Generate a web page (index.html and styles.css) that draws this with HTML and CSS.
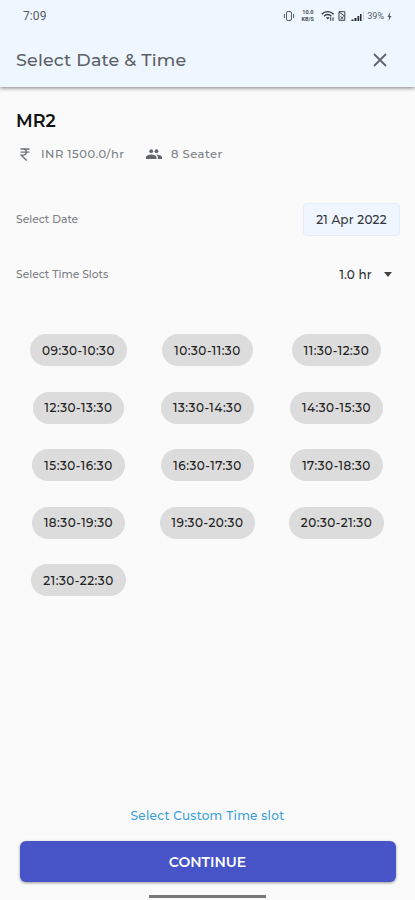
FILE: index.html
```html
<!DOCTYPE html>
<html lang="en">
<head>
    <meta charset="UTF-8">
    <meta name="viewport" content="width=device-width, initial-scale=1.0">
    <title>Select Date &amp; Time</title>
    <link rel="stylesheet" href="styles.css">
</head>
<body>
    <div class="screen">
        <header class="header">
            <div class="status-bar">
                <span class="clock">7:09</span>
                <div class="status-icons">
                    <svg class="vibrate" width="12" height="12" viewBox="0 0 12 12" fill="none" stroke="#555b62">
                        <rect x="3.5" y="1.5" width="5" height="9" rx="1.5"/>
                        <path d="M1.4 4v4M10.6 4v4"/>
                    </svg>
                    <span class="net-speed"><span>10.0</span><span>KB/S</span></span>
                    <svg class="wifi" width="14" height="12" viewBox="0 0 14 12" fill="none" stroke="#2e3238" stroke-width="1.3">
                        <path d="M.8 4.2C4.2.8 9.2.8 12.6 4.2M3 6.2c2.2-2 5.2-2 7.4 0"/>
                        <path d="M4.8 7.2h4L6.8 9.6z" fill="#2e3238" stroke="none"/>
                        <path d="M9.7 7.3v3.5M12 7.3v3.5" stroke-width="1"/>
                    </svg>
                    <svg class="sim" width="8" height="10" viewBox="0 0 8 10" fill="none" stroke="#3b4046">
                        <path d="M1 .7h5.8v8.6H1zM1 1l5.5 4M2.5 5.5l3 2.5M5.5 5.5l-3 2.5"/>
                    </svg>
                    <svg class="signal" width="14" height="11" viewBox="0 0 14 11" fill="#24282d">
                        <path d="M.5 8.5h2V10h-2zM3.5 7h2v3h-2zM6.5 5h1.7v5H6.5zM9 3h1.5v7H9z"/>
                        <path d="M12.3.5h.8V10h-.8z" fill="#c1c8d0"/>
                    </svg>
                    <span class="battery">39%</span>
                    <svg class="bolt" width="5" height="9" viewBox="0 0 5 9" fill="#555b62">
                        <path d="M3.2 0 .5 5h1.7L1.5 9l3-5H2.8z"/>
                    </svg>
                </div>
            </div>
            <div class="title-bar">
                <h1 class="title">Select Date &amp; Time</h1>
                <svg class="close" width="14" height="14" viewBox="0 0 14 14" fill="none" stroke="#5f6367" stroke-width="1.8">
                    <path d="M1 1l12 12M13 1L1 13"/>
                </svg>
            </div>
        </header>

        <main class="content">
            <h2 class="room-name">MR2</h2>
            <div class="room-info">
                <svg class="rupee" width="10" height="13" viewBox="0 0 10 13" fill="none" stroke="#6f7478" stroke-width="1.4">
                    <path d="M.5 1h9M.5 4.1h9M.5 1.1h2.6c4.4 0 4.4 6 0 6H1l5.7 5.5"/>
                </svg>
                <span class="price">INR 1500.0/hr</span>
                <svg class="people" width="16" height="10" viewBox="0 0 16 10" fill="#63686c">
                    <circle cx="5.2" cy="2.2" r="1.9"/>
                    <circle cx="10.5" cy="2.2" r="1.9"/>
                    <path d="M0 10V8.3C0 6.4 3.5 5.5 5.3 5.5s5.2.9 5.2 2.8V10zM11.8 10V8.2c0-1.1-.6-1.9-1.5-2.6 2 0 5.7.9 5.7 2.7V10z"/>
                </svg>
                <span class="seats">8 Seater</span>
            </div>

            <div class="row date-row">
                <span class="label">Select Date</span>
                <button class="date-btn">21 Apr 2022</button>
            </div>
            <div class="row slot-row">
                <span class="label">Select Time Slots</span>
                <div class="duration">
                    <span>1.0 hr</span>
                    <span class="arrow"></span>
                </div>
            </div>

            <div class="slots">
                <button class="slot">09:30-10:30</button>
                <button class="slot">10:30-11:30</button>
                <button class="slot">11:30-12:30</button>
                <button class="slot">12:30-13:30</button>
                <button class="slot">13:30-14:30</button>
                <button class="slot">14:30-15:30</button>
                <button class="slot">15:30-16:30</button>
                <button class="slot">16:30-17:30</button>
                <button class="slot">17:30-18:30</button>
                <button class="slot">18:30-19:30</button>
                <button class="slot">19:30-20:30</button>
                <button class="slot">20:30-21:30</button>
                <button class="slot">21:30-22:30</button>
            </div>
        </main>

        <footer class="footer">
            <a class="custom-link">Select Custom Time slot</a>
            <button class="continue-btn">CONTINUE</button>
            <div class="home-bar"></div>
        </footer>
    </div>
</body>
</html>
```
FILE: styles.css
```css
* {
    box-sizing: border-box;
}
body {
    margin: 0;
    font-family: Montserrat, Inter, sans-serif;
    background-color: #fafafa;
}
button {
    font-family: inherit;
    border: none;
    padding: 0;
    white-space: nowrap;
    cursor: pointer;
}
svg {
    flex: none;
}
.screen {
    display: flex;
    flex-direction: column;
    height: 900px;
}

/* Header */
.header {
    height: 87px;
    background-color: #eef6ff;
    box-shadow: 0 1px 4px rgba(0,0,0,0.5);
}
.status-bar {
    display: flex;
    justify-content: space-between;
    align-items: center;
    height: 32px;
    padding: 0 23px;
}
.clock {
    font-family: Roboto, sans-serif;
    font-size: 12px;
    letter-spacing: 0.1px;
    color: #555b62;
}
.status-icons {
    display: flex;
    align-items: center;
}
.net-speed {
    display: flex;
    flex-direction: column;
    width: 15px;
    margin: 0 6px 0 5px;
    font-family: Roboto, sans-serif;
    font-size: 5.5px;
    font-weight: 700;
    line-height: 7px;
    text-align: center;
    color: #4a4f55;
}
.sim {
    margin: 0 5px 0 3px;
}
.battery {
    margin: 0 3px 0 2px;
    font-family: Roboto, sans-serif;
    font-size: 9px;
    color: #555b62;
}
.title-bar {
    display: flex;
    justify-content: space-between;
    align-items: center;
    height: 55px;
    padding: 0 28px 0 16px;
}
.title {
    margin: 0;
    font-size: 17.5px;
    font-weight: 500;
    letter-spacing: 0.15px;
    color: #5c6064;
}

/* Room details */
.content {
    flex: 1;
}
.room-name {
    margin: 23px 0 0 16px;
    font-size: 17.5px;
    font-weight: 600;
    line-height: 22px;
    color: #111;
}
.room-info {
    display: flex;
    align-items: center;
    height: 20px;
    margin: 12px 0 0 20px;
    font-size: 11.5px;
    font-weight: 500;
    letter-spacing: 0.5px;
    color: #7c8084;
}
.price {
    width: 105px;
    margin-left: 11px;
}
.seats {
    margin-left: 9px;
}
.row {
    display: flex;
    justify-content: space-between;
    align-items: center;
    padding: 0 15px 0 16px;
}
.date-row {
    height: 34px;
    margin-top: 38px;
}
.slot-row {
    height: 34px;
    margin-top: 21px;
}
.label {
    font-size: 10.7px;
    font-weight: 500;
    color: #7c8084;
}
.date-btn {
    width: 97px;
    height: 33px;
    border: 1px solid #e5edf7;
    border-radius: 4px;
    background-color: #eff6ff;
    font-size: 12px;
    font-weight: 500;
    letter-spacing: 0.2px;
    color: #34383d;
}
.duration {
    display: flex;
    align-items: center;
    gap: 12px;
    padding-right: 8px;
    font-size: 12px;
    font-weight: 500;
    letter-spacing: 0.2px;
    color: #2c2f33;
}
.arrow {
    border: 4px solid transparent;
    border-top: 5px solid #444;
    border-bottom: none;
}

/* Time slots */
.slots {
    display: grid;
    grid-template-columns: repeat(3, 129px);
    grid-auto-rows: 32px;
    row-gap: 25.5px;
    justify-items: center;
    margin: 43px 0 0 14px;
}
.slot {
    padding: 0 12px;
    border-radius: 16px;
    background-color: #dcdcdc;
    font-size: 12px;
    font-weight: 500;
    letter-spacing: 0.5px;
    color: #222;
}

/* Bottom actions */
.footer {
    display: flex;
    flex-direction: column;
    align-items: center;
    height: 95px;
}
.custom-link {
    height: 36px;
    font-size: 12px;
    font-weight: 500;
    letter-spacing: 0.3px;
    line-height: 22px;
    color: #3c9fd6;
}
.continue-btn {
    width: 376px;
    height: 41px;
    border-radius: 6px;
    background-color: #4654c8;
    box-shadow: 0 1px 3px rgba(0,0,0,0.4);
    font-size: 14px;
    font-weight: 600;
    color: #fff;
}
.home-bar {
    width: 117px;
    height: 3px;
    margin-top: 13px;
    background-color: #777;
}
```
